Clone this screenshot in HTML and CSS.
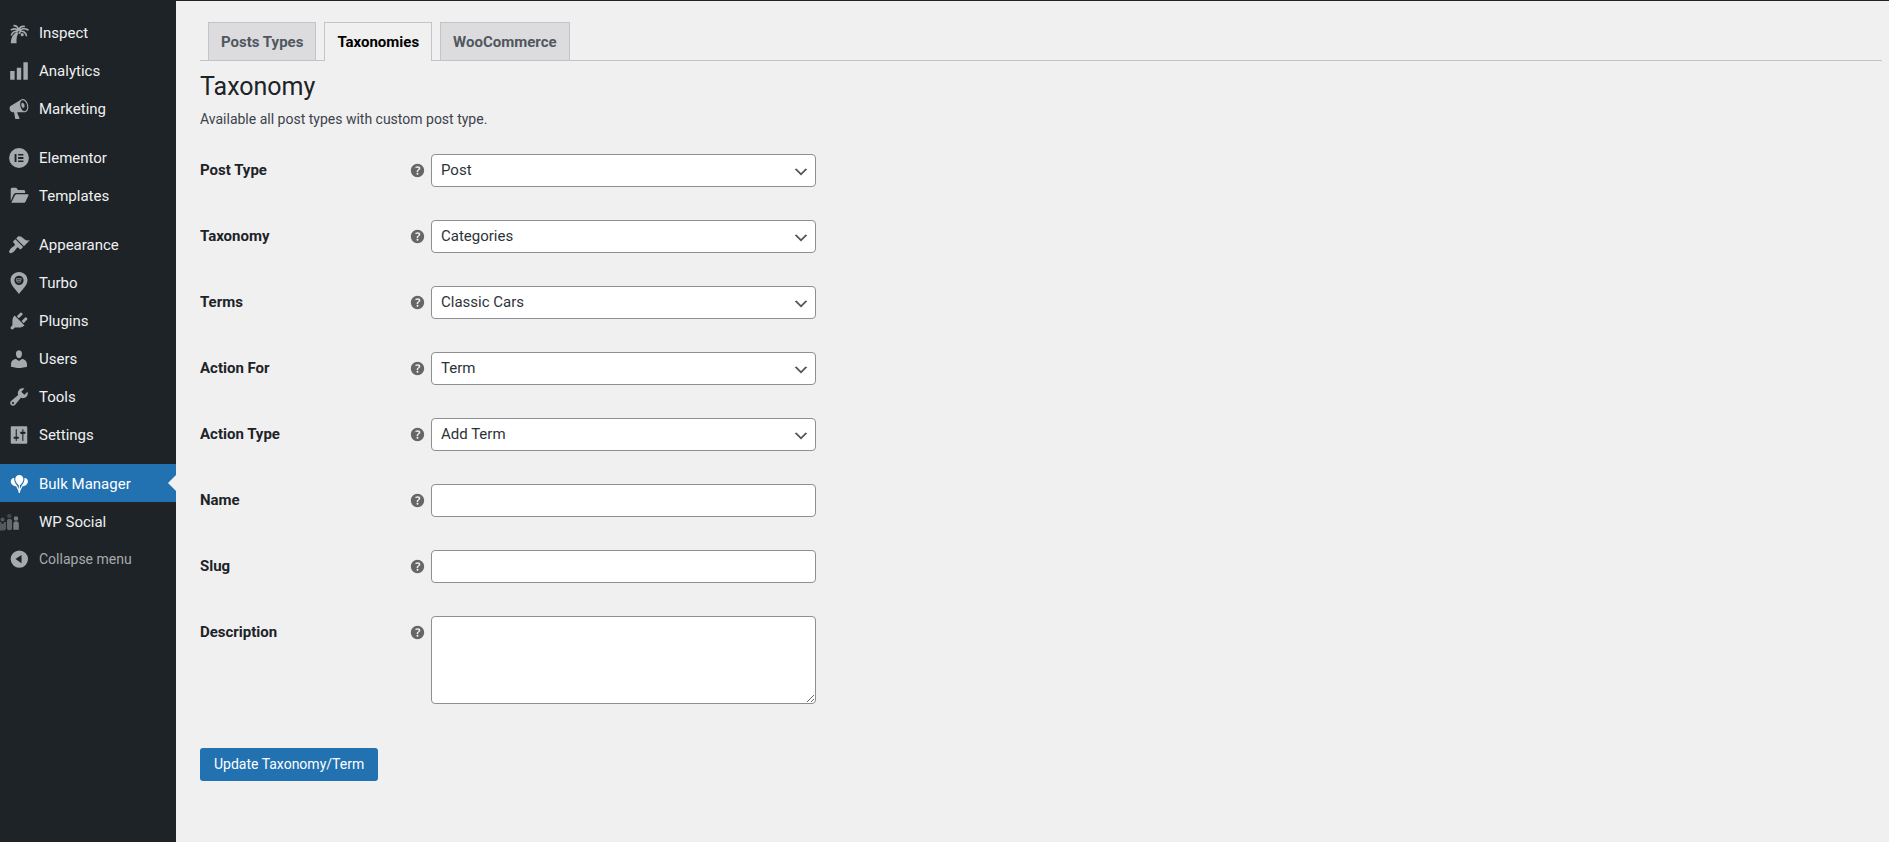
FILE: index.html
```html
<!DOCTYPE html>
<html lang="en">

<head>
    <meta charset="UTF-8">
    <meta name="viewport" content="width=device-width, initial-scale=1.0">
    <title>Bulk Manager</title>
    <link rel="stylesheet" href="styles.css">
</head>

<body>
    <svg class="sprite" aria-hidden="true">
        <symbol id="help" viewBox="0 0 20 20">
            <path d="M17 10c0-3.87-3.14-7-7-7-3.87 0-7 3.13-7 7s3.13 7 7 7c3.86 0 7-3.13 7-7zm-6.3 1.48H9.14v-.43c0-.38.08-.7.24-.98s.46-.57.88-.89c.41-.29.68-.53.81-.71.14-.18.2-.39.2-.62 0-.25-.09-.44-.28-.58-.19-.13-.45-.19-.79-.19-.58 0-1.25.15-2 .45l-.64-1.28c.87-.49 1.8-.74 2.77-.74.81 0 1.45.2 1.92.58.48.39.71.91.71 1.55 0 .43-.09.8-.29 1.11-.19.32-.57.67-1.11 1.06-.38.28-.61.49-.71.63-.1.15-.15.34-.15.57v.47zm-1.47 2.74c-.18-.17-.27-.42-.27-.73 0-.33.08-.58.26-.75s.43-.25.77-.25c.32 0 .57.09.75.26s.27.42.27.74c0 .3-.09.55-.27.72-.18.18-.43.27-.75.27-.33 0-.58-.09-.76-.26z" />
        </symbol>
    </svg>

    <nav class="admin-menu">
        <ul class="menu-group">
            <li><a href="#" class="menu-item">
                <svg class="menu-icon" viewBox="0 0 20 20"><path d="M2.500 19.400c.1-4.800 1.700-8 5-10.400l2.200 1C7.900 12.300 7.500 15.200 7.800 19.400z" /><circle cx="12.900" cy="11.500" r="1.400" /><circle cx="10.600" cy="9.800" r="1" /><path class="fronds" d="M9.500 8.300C8.300 6.200 6 5.600 2.600 7.200M9.300 8.600C6.600 8 4 9.200 3 12.200M9.600 7.800C9.300 4.900 8 3.200 5 3.300M9.900 7.700C10.500 4.800 12.100 3.400 15.400 4.100M10 8.200C12 6 15.500 5.600 18.600 7.500M10.500 8.700C13.500 7.900 16.600 8.900 16.800 13" /></svg>
                Inspect</a></li>
            <li><a href="#" class="menu-item">
                <svg class="menu-icon" viewBox="0 0 20 20"><path d="M18 18V2h-4v16h4zm-6 0V7H8v11h4zm-6 0v-8H2v8h4z" /></svg>
                Analytics</a></li>
            <li><a href="#" class="menu-item">
                <svg class="menu-icon" viewBox="0 0 20 20"><path d="M18.15 5.94c.46 1.62.38 3.22-.02 4.48-.42 1.28-1.26 2.18-2.3 2.48-.16.06-.26.06-.4.06-.06.02-.12.02-.18.02-.06.02-.14.02-.22.02h-6.8l2.22 5.5c.02.14-.06.26-.14.34-.08.1-.24.16-.34.16H6.95c-.1 0-.26-.06-.34-.16-.08-.08-.16-.2-.14-.34l-1-5.5H4.25l-.02-.02c-.5.06-1.08-.18-1.54-.62s-.88-1.08-1.06-1.88c-.24-.8-.2-1.56-.02-2.2.18-.62.58-1.08 1.06-1.3l.02-.02 9-5.4c.1-.06.18-.1.24-.16.06-.04.14-.08.24-.12.16-.08.28-.12.5-.18 1.04-.3 2.24.1 3.22.98s1.84 2.24 2.26 3.86zm-2.58 5.98h-.02c.4-.1.74-.34 1.04-.7.58-.7.86-1.76.86-3.04 0-.64-.1-1.3-.28-1.98-.34-1.36-1.02-2.5-1.78-3.24s-1.68-1.1-2.46-.88c-.82.22-1.4.96-1.7 2-.32 1.04-.28 2.36.06 3.72.38 1.36 1 2.5 1.8 3.24.78.74 1.62 1.1 2.48.88zm-2.54-7.52c.22-.04.42-.02.62.04.38.16.76.48 1.02 1s.42 1.2.42 1.78c0 .3-.04.56-.12.8-.18.48-.44.84-.86.94-.34.1-.8-.06-1.14-.4s-.64-.86-.78-1.5c-.18-.62-.12-1.24.02-1.72s.48-.84.82-.94z" /></svg>
                Marketing</a></li>
        </ul>
        <ul class="menu-group">
            <li><a href="#" class="menu-item">
                <svg class="menu-icon" viewBox="0 0 20 20"><path fill-rule="evenodd" d="M10 1a9 9 0 1 0 0 18 9 9 0 0 0 0-18zM6 6.3h1.7v7.4H6zM9.2 6.3h4.8v1.5H9.2zM9.2 9.2h4.8v1.6H9.2zM9.2 12.2h4.8v1.5H9.2z" /></svg>
                Elementor</a></li>
            <li><a href="#" class="menu-item">
                <svg class="menu-icon" viewBox="0 0 20 20"><path d="M2.500 14.500V4c0-.8.6-1.400 1.400-1.400h3.600L9.200 4.500h5c.8 0 1.400.6 1.400 1.400v1.300H7.500c-1 0-1.800.5-2.300 1.300zM3 16.200l3.300-6.900c.3-.6.8-.9 1.500-.9h10c.7 0 1.100.6.8 1.200l-2.600 5.500c-.3.700-.9 1.100-1.600 1.100z" /></svg>
                Templates</a></li>
        </ul>
        <ul class="menu-group">
            <li><a href="#" class="menu-item">
                <svg class="menu-icon" viewBox="0 0 20 20"><path d="M14.48 11.06L7.41 3.99l1.500-1.500c.5-.56 2.300-.47 3.510.32 1.210.8 1.430 1.280 2.910 2.100 1.180.64 2.450 1.260 4.450.85zm-.71.71L6.700 4.700 4.930 6.470c-.39.39-.39 1.020 0 1.410l1.060 1.060c.39.39.39 1.030 0 1.420-.6.6-1.430 1.110-2.210 1.690-.35.26-.7.53-1.010.84C1.430 14.230.4 16.080 1.400 17.070c.99 1 2.840-.03 4.180-1.360.31-.31.58-.66.85-1.020.57-.78 1.080-1.610 1.690-2.210.39-.39 1.020-.39 1.410 0l1.060 1.060c.39.39 1.020.39 1.410 0z" /></svg>
                Appearance</a></li>
            <li><a href="#" class="menu-item">
                <svg class="menu-icon" viewBox="0 0 20 20"><path fill-rule="evenodd" d="M10 0C5.500 0 2.300 3.300 2.300 7.500c0 4.300 4 7.800 7.700 12.500 3.700-4.700 7.700-8.200 7.700-12.500C17.700 3.300 14.500 0 10 0zm0 3.400a4.200 4.200 0 1 1 0 8.400 4.200 4.200 0 0 1 0-8.400z" /><path class="pin-mark" d="M7.800 6h4.400M7.800 7.600h4.400M8.200 9.200h2.500M7.800 5.800v3M12.200 5.800L11 9.400" /></svg>
                Turbo</a></li>
            <li><a href="#" class="menu-item">
                <svg class="menu-icon" viewBox="0 0 20 20"><path d="M13.110 4.360L9.870 7.600 8 5.730l3.240-3.240c.35-.34 1.050-.2 1.560.32.52.51.66 1.210.31 1.550zm-8 1.770l.91-1.120 9.010 9.010-1.190.84c-.71.71-2.630 1.160-3.820 1.160H6.140L4.900 17.260c-.59.59-1.540.59-2.120 0-.59-.58-.59-1.530 0-2.120l1.240-1.240v-3.880c0-1.130.4-3.190 1.090-3.890zm7.260 3.970l3.240-3.240c.34-.35 1.040-.21 1.550.31.52.51.66 1.210.31 1.550l-3.240 3.250z" /></svg>
                Plugins</a></li>
            <li><a href="#" class="menu-item">
                <svg class="menu-icon" viewBox="0 0 20 20"><path d="M10 9.250c-2.270 0-2.730-3.440-2.730-3.440C7 4.020 7.820 2 9.970 2c2.160 0 2.980 2.020 2.710 3.810 0 0-.41 3.440-2.680 3.440zm0 2.570L12.720 10c2.390 0 4.520 2.330 4.520 4.530v2.490s-3.650 1.130-7.240 1.130c-3.650 0-7.240-1.130-7.240-1.130v-2.490c0-2.250 1.940-4.480 4.470-4.480z" /></svg>
                Users</a></li>
            <li><a href="#" class="menu-item">
                <svg class="menu-icon" viewBox="0 0 20 20"><path d="M16.680 9.770c-1.340 1.340-3.300 1.670-4.950.99l-5.410 6.520c-.99.99-2.590.99-3.580 0s-.99-2.590 0-3.570l6.520-5.420c-.68-1.650-.35-3.610.99-4.950 1.280-1.280 3.120-1.620 4.720-1.060l-2.890 2.890 2.820 2.820 2.860-2.870c.53 1.580.18 3.390-1.080 4.650zM3.810 16.210c.4.39 1.040.39 1.430 0 .4-.4.4-1.040 0-1.430-.39-.4-1.030-.4-1.430 0-.39.39-.39 1.030 0 1.430z" /></svg>
                Tools</a></li>
            <li><a href="#" class="menu-item">
                <svg class="menu-icon" viewBox="0 0 20 20"><path fill-rule="evenodd" d="M3.500 2h13c.6 0 1 .4 1 1v14c0 .6-.4 1-1 1h-13c-.6 0-1-.4-1-1V3c0-.6.4-1 1-1zM8 11.500h1c.55 0 1 .45 1 1s-.45 1-1 1H8V15c0 .28-.22.5-.5.5S7 15.280 7 15v-1.500H6c-.55 0-1-.45-1-1s.45-1 1-1h1V5c0-.28.22-.5.5-.5s.5.22.5.5zM13 9h-1c-.55 0-1-.45-1-1s.45-1 1-1h1V5c0-.28.22-.5.5-.5s.5.22.5.5v2h1c.55 0 1 .45 1 1s-.45 1-1 1h-1v6c0 .28-.22.5-.5.5s-.5-.22-.5-.5z" /></svg>
                Settings</a></li>
        </ul>
        <ul class="menu-group">
            <li><a href="#" class="menu-item current">
                <svg class="menu-icon" viewBox="0 0 20 20"><path d="M10.300 1.800c2.200 0 3.700 1.600 3.700 3.700 0 2.300-1.400 4.200-2.900 5.500H9.500C8 9.700 6.600 7.800 6.600 5.500c0-2.100 1.500-3.700 3.700-3.700zM5.600 4.600c-.1 3 1.100 5.300 3 7.300-1.500.4-3.400 0-4.700-1.200C2.400 9.400 2.200 7.400 2.900 6.100c.6-1 1.500-1.500 2.700-1.500zM15 4.600c.1 3-1.100 5.300-3 7.300 1.500.4 3.400 0 4.700-1.200 1.500-1.300 1.700-3.300 1-4.600-.6-1-1.500-1.500-2.700-1.500z" /><path class="strings" d="M10.300 11v5M7.800 11.800l1.800 3.500h1.400l1.800-3.500M9.600 15l.7 3 .7-3" /></svg>
                Bulk Manager</a></li>
            <li><a href="#" class="menu-item">
                <svg class="menu-icon social" viewBox="0 0 40 22"><g opacity=".4"><circle cx="2.500" cy="8.500" r="2" /><path d="M0 11h1.200c0 2.500 2.800 2.500 2.800 0h2v6c0 2-1.500 2.500-3.500 2.500H0z" /></g><g opacity=".25"><circle cx="9.300" cy="5" r="2.200" /></g><g opacity=".5"><path d="M7 9.500c0-2 5-2 5 0V17c0 3-5 3-5 0z" /></g><g opacity=".65"><circle cx="16" cy="7.500" r="2.200" /><path d="M13.300 12.500c0-3 5.500-3 5.500 0v6.300h-5.500z" /></g></svg>
                WP Social</a></li>
            <li><button type="button" class="menu-item collapse">
                <svg class="menu-icon" viewBox="0 0 20 20"><path fill-rule="evenodd" d="M10.300 2.200a7.900 7.900 0 1 0 0 15.800 7.900 7.900 0 0 0 0-15.800zM12.300 6.300v7.600L6.800 10.100z" /></svg>
                Collapse menu</button></li>
        </ul>
    </nav>

    <main class="content">
        <nav class="nav-tabs">
            <a href="#" class="nav-tab">Posts Types</a>
            <a href="#" class="nav-tab active">Taxonomies</a>
            <a href="#" class="nav-tab">WooCommerce</a>
        </nav>
        <h1>Taxonomy</h1>
        <p class="intro">Available all post types with custom post type.</p>

        <form>
            <div class="form-row">
                <label for="post-type">Post Type</label>
                <svg class="help"><use href="#help" /></svg>
                <select id="post-type" class="field">
                    <option>Post</option>
                </select>
            </div>
            <div class="form-row">
                <label for="taxonomy">Taxonomy</label>
                <svg class="help"><use href="#help" /></svg>
                <select id="taxonomy" class="field">
                    <option>Categories</option>
                </select>
            </div>
            <div class="form-row">
                <label for="terms">Terms</label>
                <svg class="help"><use href="#help" /></svg>
                <select id="terms" class="field">
                    <option>Classic Cars</option>
                </select>
            </div>
            <div class="form-row">
                <label for="action-for">Action For</label>
                <svg class="help"><use href="#help" /></svg>
                <select id="action-for" class="field">
                    <option>Term</option>
                </select>
            </div>
            <div class="form-row">
                <label for="action-type">Action Type</label>
                <svg class="help"><use href="#help" /></svg>
                <select id="action-type" class="field">
                    <option>Add Term</option>
                </select>
            </div>
            <div class="form-row">
                <label for="name">Name</label>
                <svg class="help"><use href="#help" /></svg>
                <input type="text" id="name" class="field">
            </div>
            <div class="form-row">
                <label for="slug">Slug</label>
                <svg class="help"><use href="#help" /></svg>
                <input type="text" id="slug" class="field">
            </div>
            <div class="form-row">
                <label for="description">Description</label>
                <svg class="help"><use href="#help" /></svg>
                <textarea id="description" class="field"></textarea>
            </div>
            <button type="submit" class="button-primary">Update Taxonomy/Term</button>
        </form>
    </main>
</body>

</html>
```
FILE: styles.css
```css
* {
    box-sizing: border-box;
}

body {
    margin: 0;
    display: flex;
    min-height: 100vh;
    background: #f0f0f1;
    color: #1d2327;
    font-family: Roboto, sans-serif;
    font-size: 15px;
}

.sprite {
    display: none;
}

/* Side menu */
.admin-menu {
    flex: none;
    width: 176px;
    padding-top: 13px;
    background: #1d2327;
    display: flex;
    flex-direction: column;
    gap: 11px;
}

.menu-group {
    list-style: none;
    margin: 0;
    padding: 0;
}

.menu-item {
    display: flex;
    align-items: center;
    gap: 9px;
    width: 100%;
    height: 38px;
    padding: 1px 0 0 8px;
    color: #f0f0f1;
    text-decoration: none;
    position: relative;
}

.menu-icon {
    flex: none;
    width: 22px;
    height: 22px;
    fill: #a7aaad;
}

.fronds {
    fill: none;
    stroke: #a7aaad;
    stroke-width: 1.5;
}

.pin-mark {
    fill: none;
    stroke: #72777c;
}

.current {
    background: #2271b1;
    color: #fff;
}

.current .menu-icon {
    fill: #fff;
}

.current::after {
    content: "";
    position: absolute;
    right: 0;
    top: 11px;
    border: 8px solid transparent;
    border-left: 0;
    border-right-color: #f0f0f1;
}

.strings {
    fill: none;
    stroke: #fff;
    stroke-width: 1;
}

.social {
    width: 40px;
    margin: 0 -10px 0 -8px;
}

.collapse {
    padding-top: 0;
    border: 0;
    background: none;
    color: #a7aaad;
    font: inherit;
    font-size: 14px;
}

/* Main area */
.content {
    flex: 1;
    min-width: 0;
    border-top: 1px solid #1d2327;
    padding: 21px 7px 40px 24px;
}

.nav-tabs {
    display: flex;
    gap: 8px;
    padding-left: 8px;
    border-bottom: 1px solid #c3c4c7;
}

.nav-tab {
    padding: 7px 12px 5px;
    border: 1px solid #c3c4c7;
    border-bottom: 0;
    background: #dcdcde;
    color: #50575e;
    font-weight: bold;
    line-height: 25px;
    text-decoration: none;
}

.nav-tab.active {
    margin-bottom: -1px;
    background: #f0f0f1;
    color: #000;
}

h1 {
    margin: 9px 0 0;
    font-size: 25px;
    font-weight: normal;
    line-height: 33px;
}

.intro {
    margin: 5px 0 0;
    color: #3c434a;
    font-size: 14px;
    line-height: 22px;
}

form {
    display: flex;
    flex-direction: column;
    align-items: flex-start;
    gap: 33px;
    padding-top: 24px;
}

.form-row {
    display: grid;
    grid-template-columns: 208px 19px 385px;
    align-items: start;
    max-width: 100%;
}

.form-row label {
    font-weight: bold;
    line-height: 33px;
}

.help {
    width: 19px;
    height: 19px;
    margin-top: 7px;
    fill: #666;
}

.field {
    height: 33px;
    margin: 0 0 0 4px;
    width: 100%;
    padding: 0 26px 1px 9px;
    border: 1px solid #8c8f94;
    border-radius: 4px;
    background: #fff;
    color: #2c3338;
    font: inherit;
}

select.field {
    appearance: none;
    background: #fff url("data:image/svg+xml,%3Csvg xmlns='http://www.w3.org/2000/svg' viewBox='0 0 20 20'%3E%3Cpath d='M5 6l5 5 5-5 2 1-7 7-7-7 2-1z' fill='%23555'/%3E%3C/svg%3E") no-repeat right 5px top 63%;
    background-size: 18px 18px;
}

textarea.field {
    display: block;
    height: 88px;
    padding: 2px 7px;
}

.button-primary {
    height: 33px;
    margin-top: 11px;
    padding: 0 14px 1px;
    border: 0;
    border-radius: 3px;
    background: #2271b1;
    color: #fff;
    font: inherit;
    font-size: 14px;
}
```
